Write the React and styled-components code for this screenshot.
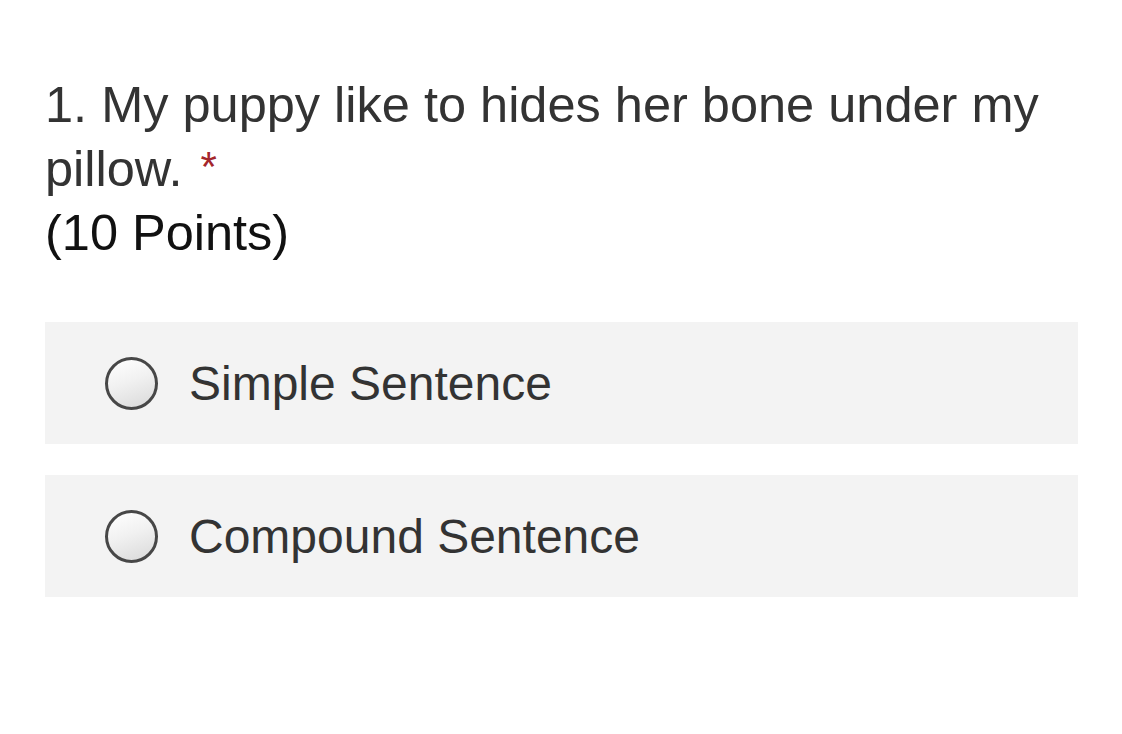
import React from "react";
import styled, { createGlobalStyle } from "styled-components";

const Global = createGlobalStyle`
  body {
    margin: 0;
    background: #ffffff;
    font-family: "Liberation Sans", Arial, sans-serif;
  }
`;

const Page = styled.div`
  padding: 73px 0 0 45px;
  width: 1033px;
`;

const Question = styled.div`
  font-size: 50.5px;
  line-height: 64px;
  color: #333333;
`;

const Star = styled.span`
  color: #a4262c;
  margin-left: 18px;
  font-size: 42px;
  line-height: 30px;
  vertical-align: 5px;
`;

const Points = styled.div`
  font-size: 50.5px;
  line-height: 64px;
  color: #111111;
`;

const Options = styled.div`
  margin-top: 57px;
  display: flex;
  flex-direction: column;
  gap: 31px;
`;

const Option = styled.label`
  display: flex;
  align-items: center;
  gap: 31px;
  height: 122px;
  padding-left: 60px;
  background: #f3f3f3;
`;

const Radio = styled.span`
  box-sizing: border-box;
  width: 53px;
  height: 53px;
  border-radius: 50%;
  border: 3px solid #474747;
  background: linear-gradient(160deg, #ffffff 0%, #f1f1f1 45%, #d9d9d9 100%);
`;

const OptionText = styled.span`
  font-size: 48px;
  color: #333333;
`;

const choices = ["Simple Sentence", "Compound Sentence"];

const App = () => {
  return (
    <Page>
      <Global />
      <Question>
        {"1. My puppy like to hides her bone under my "}
        {"pillow."}
        <Star>*</Star>
      </Question>
      <Points>(10 Points)</Points>
      <Options>
        {choices.map((c) => (
          <Option key={c}>
            <Radio />
            <OptionText>{c}</OptionText>
          </Option>
        ))}
      </Options>
    </Page>
  );
};

export default App;
